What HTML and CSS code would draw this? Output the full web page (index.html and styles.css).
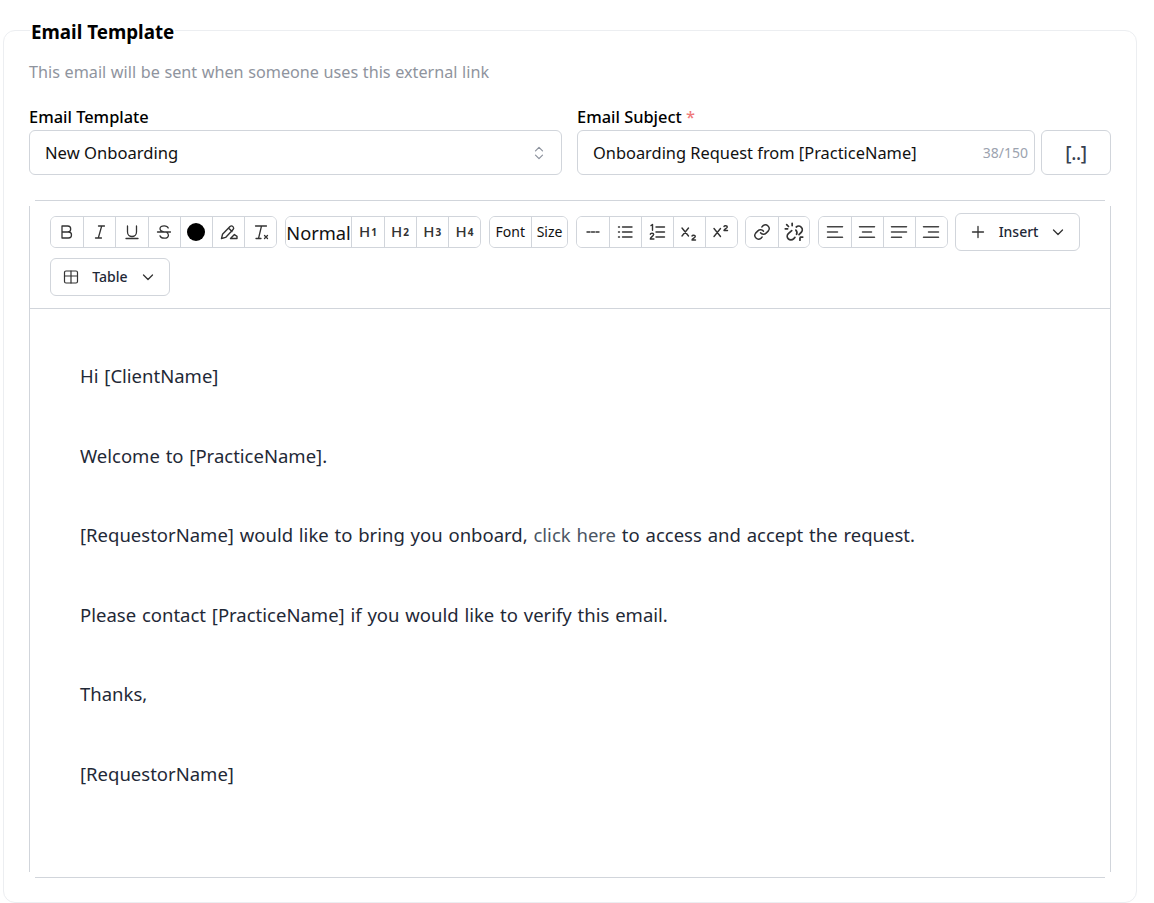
FILE: index.html
```html
<!DOCTYPE html>
<html lang="en">
<head>
<meta charset="utf-8">
<title>Email Template</title>
<link rel="stylesheet" href="styles.css">
</head>
<body>
<fieldset class="card">
  <legend class="card-title">Email Template</legend>
  <p class="hint">This email will be sent when someone uses this external link</p>
  <div class="fields">
    <div class="field field-template">
      <label class="label">Email Template</label>
      <div class="control select">
        <span>New Onboarding</span>
        <svg class="chev" width="16" height="18" viewBox="0 0 16 18" fill="none" stroke="#8b919c" stroke-width="1.200" stroke-linecap="round" stroke-linejoin="round"><path d="M4.500 6.800 8 3.300l3.500 3.500"/><path d="M4.500 11.200 8 14.700l3.500-3.500"/></svg>
      </div>
    </div>
    <div class="field field-subject">
      <label class="label">Email Subject <span class="req">*</span></label>
      <div class="subject-row">
        <div class="control subject">
          <span>Onboarding Request from [PracticeName]</span>
          <span class="count">38/150</span>
        </div>
        <button class="merge">[..]</button>
      </div>
    </div>
  </div>
  <div class="editor">
    <div class="toolbar">
      <div class="group">
        <button class="btn"><svg width="18" height="18" viewBox="0 0 18 18" class="ic"><path d="M4 3h5.700a3 3 0 0 1 0 6H4zM4 9h6.500a3 3 0 0 1 0 6H4z"/></svg></button>
        <button class="btn"><svg width="18" height="18" viewBox="0 0 18 18" class="ic"><path d="M7.500 3h6M4.500 15h6M10.700 3 7.300 15"/></svg></button>
        <button class="btn"><svg width="18" height="18" viewBox="0 0 18 18" class="ic"><path d="M4.500 3v6a4.500 4.500 0 0 0 9 0V3M3 15.500h12"/></svg></button>
        <button class="btn"><svg width="18" height="18" viewBox="0 0 18 18" class="ic"><path d="M13.200 5C12.700 3.500 11.200 2.800 9.200 2.800 6.800 2.800 5 4 5 5.800c0 1.700 1.300 2.600 4 3.200M2.500 9h13M5 12.800c.5 1.600 2.100 2.400 4.200 2.400 2.500 0 4.200-1.200 4.200-3 0-1.200-.6-2.100-1.500-2.700"/></svg></button>
        <button class="btn"><span class="dot"></span></button>
        <button class="btn"><svg width="20" height="20" viewBox="0 0 20 20" class="ic ic-mid"><path d="M2.500 16.500l1-4.200 7.500-7.800a2.200 2.200 0 0 1 3.100 3.100l-7.500 7.800zM9.500 6l3.500 3.500M11.500 16.500H18v-2.200l-2.600-1.800z"/></svg></button>
        <button class="btn"><svg width="20" height="20" viewBox="0 0 20 20" class="ic"><path d="M4.500 4h11M10.500 4 7.500 16.500M5 16.500h5M13.500 13.500l3 3M16.500 13.500l-3 3"/></svg></button>
      </div>
      <div class="group">
        <button class="btn btn-normal">Normal</button>
        <button class="btn head">H<small>1</small></button>
        <button class="btn head">H<small>2</small></button>
        <button class="btn head">H<small>3</small></button>
        <button class="btn head">H<small>4</small></button>
      </div>
      <div class="group">
        <button class="btn btn-font">Font</button>
        <button class="btn btn-size">Size</button>
      </div>
      <div class="group group-list">
        <button class="btn"><svg width="16" height="16" viewBox="0 0 16 16" class="ic ic-mid"><path d="M2 8h3M6.500 8h3M11 8h3"/></svg></button>
        <button class="btn"><svg width="18" height="18" viewBox="0 0 18 18" class="ic ic-mid"><path d="M6.500 4h9.500M6.500 9h9.500M6.500 14h9.500M2.500 4h1M2.500 9h1M2.500 14h1"/></svg></button>
        <button class="btn"><svg width="18" height="18" viewBox="0 0 18 18" class="ic ic-mid"><path d="M8 4h8.500M8 9h8.500M8 14h8.500M3 2.500l1.500-1v5.800M2.300 11.200c.2-1.200 3.400-1.400 3.400.4 0 1.400-3.400 2.400-3.400 4.400h3.600"/></svg></button>
        <button class="btn"><svg width="20" height="20" viewBox="0 0 20 20" class="ic ic-mid"><path d="M3 6l6.500 8M9.500 6 3 14M13 14c.3-1.100 3.300-1.200 3.300.4 0 1.300-3.300 2.100-3.300 3.600h3.500"/></svg></button>
        <button class="btn"><svg width="20" height="20" viewBox="0 0 20 20" class="ic ic-mid"><path d="M3 6.500l6.500 8M9.500 6.500 3 14.500M13 4.500c.3-1.100 3.300-1.200 3.300.4 0 1.300-3.300 2.100-3.300 3.600h3.500"/></svg></button>
      </div>
      <div class="group group-link">
        <button class="btn"><svg width="18" height="18" viewBox="0 0 24 24" class="ic ic-thick"><path d="M10 13a5 5 0 0 0 7.500.5l3-3a5 5 0 0 0-7-7l-1.700 1.700"/><path d="M14 11a5 5 0 0 0-7.500-.5l-3 3a5 5 0 0 0 7 7l1.700-1.700"/></svg></button>
        <button class="btn"><svg width="22" height="22" viewBox="0 0 24 24" class="ic ic-thick"><path d="M14.500 6.500a4 4 0 0 1 5 6.300l-2 2M9.500 10.500l-3.700 3.200a4 4 0 0 0 5.700 5.700l1.500-1.500M14 10a4 4 0 0 1 .8 4.500M10 2.500V5M2.500 8.500H5M18.500 18.500V21M19 17.500h2.500M4 4l2 2"/></svg></button>
      </div>
      <div class="group group-align">
        <button class="btn"><svg width="18" height="18" viewBox="0 0 18 18" class="ic ic-bar"><path d="M1.500 3.800h15M1.500 9h10M1.500 14.200h15"/></svg></button>
        <button class="btn"><svg width="18" height="18" viewBox="0 0 18 18" class="ic ic-bar"><path d="M1.500 3.800h15M4.500 9h9M1.500 14.200h15"/></svg></button>
        <button class="btn"><svg width="18" height="18" viewBox="0 0 18 18" class="ic ic-bar"><path d="M1.500 3.800h15M1.500 9h15M1.500 14.200h10"/></svg></button>
        <button class="btn"><svg width="18" height="18" viewBox="0 0 18 18" class="ic ic-bar"><path d="M1.500 3.800h15M6.500 9h10M1.500 14.200h15"/></svg></button>
      </div>
      <button class="drop drop-insert">
        <svg width="16" height="16" viewBox="0 0 16 16" class="ic"><path d="M8 2.500v11M2.500 8h11"/></svg>
        <span class="drop-text">Insert</span>
        <svg width="14" height="14" viewBox="0 0 14 14" class="ic"><path d="M2.500 5 7 9.500 11.500 5"/></svg>
      </button>
      <button class="drop drop-table">
        <svg width="16" height="16" viewBox="0 0 16 16" class="ic ic-thin"><rect x="1.500" y="2" width="13" height="12" rx="1.500"/><path d="M1.500 7h13M8 2v12"/></svg>
        <span class="drop-text">Table</span>
        <svg width="14" height="14" viewBox="0 0 14 14" class="ic"><path d="M2.500 5 7 9.500 11.500 5"/></svg>
      </button>
    </div>
    <div class="body">
      <p>Hi [ClientName]</p>
      <p>Welcome to [PracticeName].</p>
      <p>[RequestorName] would like to bring you onboard, <a class="link">click here</a> to access and accept the request.</p>
      <p>Please contact [PracticeName] if you would like to verify this email.</p>
      <p>Thanks,</p>
      <p>[RequestorName]</p>
    </div>
  </div>
</fieldset>
</body>
</html>
```
FILE: styles.css
```css
* { box-sizing: border-box; }
html, body { margin: 0; padding: 0; background: #fff; }
body {
  font-family: "Noto Sans", "Open Sans", sans-serif;
  color: #111827;
  padding: 17px 17px 0 3px;
  height: 903px;
  overflow: hidden;
}
.card {
  margin: 0;
  border: 1px solid #eceef1;
  border-radius: 12px;
  padding: 0 25px 0 25px;
  height: 886px;
  min-width: 0;
}
.card-title {
  margin-left: 1px;
  padding: 4px 1px 0;
  font-size: 18.800px;
  line-height: 22px;
  font-weight: 700;
  color: #000;
}
.hint {
  margin: 17px 0 0;
  font-size: 16.200px;
  word-spacing: 0.400px;
  line-height: 24px;
  color: #8f949e;
}
.fields { display: flex; gap: 15px; margin-top: 21px; }
.field-template { width: 533px; }
.field-subject { width: 534px; }
.label {
  display: block;
  font-size: 16.400px;
  line-height: 24px;
  font-weight: 500;
  color: #000;
  margin-bottom: 1px;
}
.req { color: #ef7a7a; }
.control {
  display: flex;
  align-items: center;
  justify-content: space-between;
  height: 45px;
  border: 1px solid #d1d5db;
  border-radius: 6px;
  padding: 0 15px;
  font-size: 16.600px;
  color: #111;
}
.select { padding-right: 14px; }
.subject-row { display: flex; gap: 6px; }
.subject { flex: 1; padding-right: 6px; font-size: 16.400px; }
.count { font-size: 14px; color: #9ca3af; }
.merge {
  width: 70px;
  height: 45px;
  border: 1px solid #d1d5db;
  border-radius: 6px;
  background: #fff;
  font-family: inherit;
  font-size: 19px;
  font-weight: 500;
  color: #374151;
  letter-spacing: -0.300px;
}
.editor {
  margin-top: 25px;
  height: 678px;
  background:
    linear-gradient(#d1d5db, #d1d5db) 6px 0 / calc(100% - 12px) 1px no-repeat,
    linear-gradient(#d1d5db, #d1d5db) 6px 100% / calc(100% - 12px) 1px no-repeat,
    linear-gradient(#d1d5db, #d1d5db) 0 6px / 1px calc(100% - 12px) no-repeat,
    linear-gradient(#d1d5db, #d1d5db) 100% 6px / 1px calc(100% - 12px) no-repeat;
}
.toolbar {
  display: flex;
  flex-wrap: wrap;
  align-items: center;
  align-content: flex-start;
  gap: 7px 7.500px;
  height: 109px;
  padding: 13px 20px 12px 21px;
  border-bottom: 1px solid #d1d5db;
}
.group {
  display: flex;
  height: 32px;
  border: 1px solid #d1d5db;
  border-radius: 6px;
  overflow: hidden;
}
.btn {
  width: 32.200px;
  padding: 0;
  height: 100%;
  display: flex;
  align-items: center;
  justify-content: center;
  background: #fff;
  border: 0;
  border-left: 1px solid #d1d5db;
  font-family: inherit;
  font-size: 14px;
  color: #111;
}
.btn:first-child { border-left: 0; }
.group-list .btn, .group-align .btn { width: 32px; }
.group-link .btn { width: 31.500px; }
.btn-normal { width: 65.500px; font-size: 18.300px; font-weight: 400; white-space: nowrap; }
.btn-font { width: 41.500px; padding-bottom: 2px; }
.btn-size { width: 36px; padding-bottom: 2px; }
.head {
  font-size: 15px;
  font-weight: 500;
  color: #333;
  padding-bottom: 2px;
}
.head small { font-size: 10px; font-weight: 700; margin-top: 2px; margin-left: 1px; }
.ic { fill: none; stroke: #333; stroke-width: 1.300; stroke-linecap: round; stroke-linejoin: round; }
.ic-mid { stroke-width: 1.400; }
.ic-thick { stroke-width: 1.900; }
.ic-bar { stroke: #444; stroke-width: 1.500; }
.ic-thin { stroke-width: 1.200; }
.dot { width: 18px; height: 18px; border-radius: 50%; background: #000; }
.drop {
  display: flex;
  align-items: center;
  height: 38px;
  background: #fff;
  border: 1px solid #d1d5db;
  border-radius: 6px;
  font-family: inherit;
  font-size: 14px;
  font-weight: 500;
  color: #1f2937;
  justify-content: space-between;
}
.drop-text { margin-bottom: 2px; }
.drop-insert { width: 125px; padding: 0 14px; }
.drop-table { width: 120px; padding: 0 14px 0 12px; }
.body { padding: 53px 50px 0 51px; }
.body p {
  margin: 0 0 52.500px;
  font-size: 18.500px;
  word-spacing: 1px;
  line-height: 27px;
  color: #1f2937;
}
.link { color: #4b5563; }
```
